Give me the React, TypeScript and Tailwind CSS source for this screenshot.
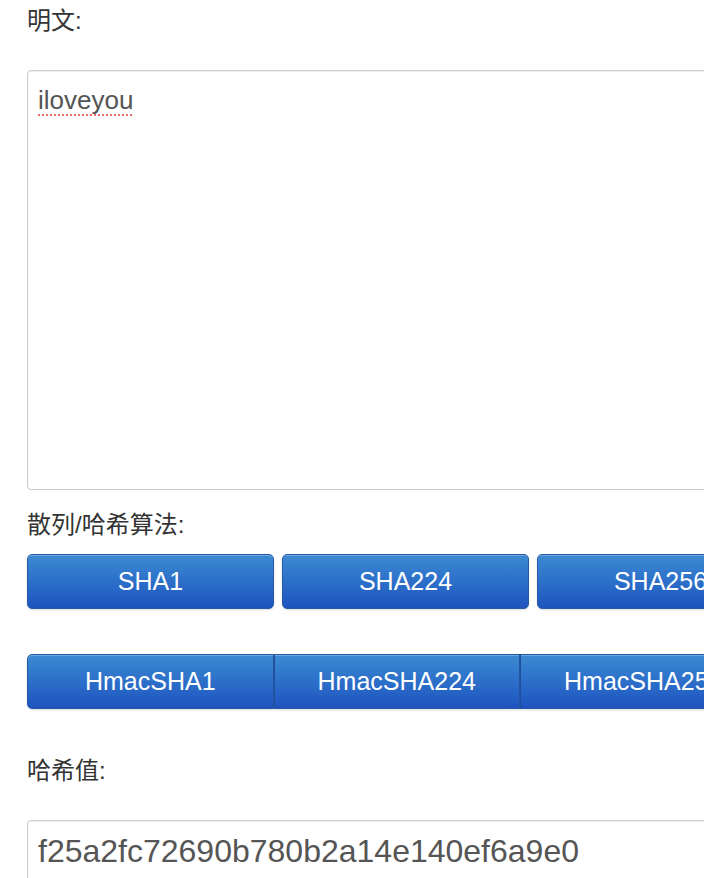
import React from "react";

const font = "font-['Helvetica','Liberation_Sans','Noto_Sans_CJK_SC',sans-serif]";

const btn =
  "shrink-0 flex items-center justify-center h-[55px] text-white text-[25px] bg-linear-to-b from-[#3d8ad2] to-[#1f53bf] border border-[#2659a8] shadow-[inset_0_1px_0_rgba(255,255,255,0.25),0_1px_2px_rgba(0,0,0,0.15)]";

function App() {
  const single = ["SHA1", "SHA224", "SHA256", "SHA384"];
  const hmac = ["HmacSHA1", "HmacSHA224", "HmacSHA256", "HmacSHA384"];

  return (
    <div className={`w-screen h-screen overflow-hidden bg-white ${font}`}>
      <div className="w-[1060px] pl-[27px]">
        <div className="h-[42px] leading-[42px] text-[24px] text-[#333]">明文:</div>

        <div className="mt-[28px] h-[420px] border border-[#ccc] rounded-[4px] px-[10px] pt-[10px] text-[26px] text-[#555] shadow-[inset_0_1px_1px_rgba(0,0,0,0.075)]">
          <span className="underline decoration-dotted decoration-[#f06a6a] decoration-2 underline-offset-[5px]">
            iloveyou
          </span>
        </div>

        <div className="mt-[15px] h-[40px] leading-[40px] text-[24px] text-[#333]">散列/哈希算法:</div>

        <div className="mt-[9px] flex gap-[8px]">
          {single.map((s) => (
            <div key={s} className={`${btn} w-[247px] rounded-[5px]`}>
              {s}
            </div>
          ))}
        </div>

        <div className="mt-[45px] flex">
          {hmac.map((s, i) => (
            <div
              key={s}
              className={`${btn} w-[246.5px] ${i === 0 ? "rounded-l-[5px]" : "border-l-[#1f4f9a]"}`}
            >
              {s}
            </div>
          ))}
        </div>

        <div className="mt-[42px] h-[40px] leading-[40px] text-[24px] text-[#333]">哈希值:</div>

        <div className="mt-[29px] h-[64px] border border-[#ccc] rounded-[4px] px-[10px] pt-[6px] text-[32px] text-[#555] shadow-[inset_0_1px_1px_rgba(0,0,0,0.075)]">
          f25a2fc72690b780b2a14e140ef6a9e0
        </div>
      </div>
    </div>
  );
}

export default App;
